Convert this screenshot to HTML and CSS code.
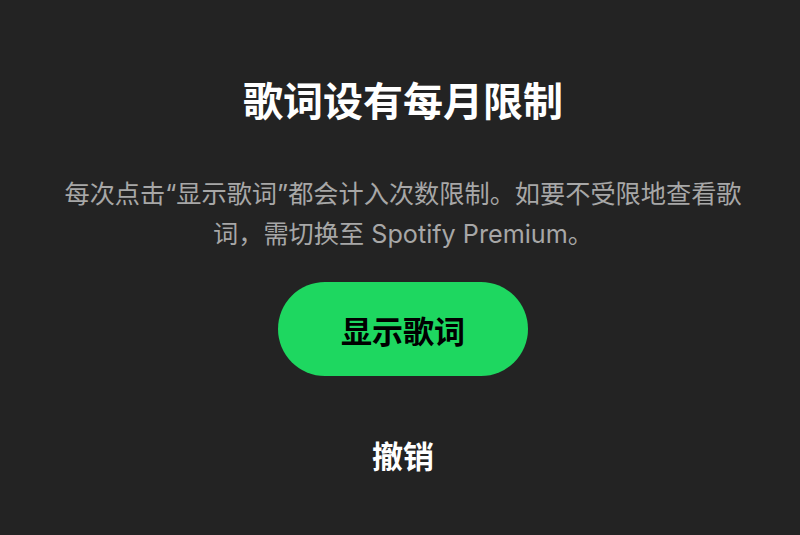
FILE: index.html
```html
<!DOCTYPE html>
<html lang="zh-CN">
<head>
<meta charset="utf-8">
<link rel="stylesheet" href="styles.css">
</head>
<body>
<div class="dialog">
  <h1 class="title">歌词设有每月限制</h1>
  <p class="desc">每次点击“显示歌词”都会计入次数限制。如要不受限地查看歌词，需切换至 Spotify Premium。</p>
  <button class="primary">显示歌词</button>
  <button class="cancel">撤销</button>
</div>
</body>
</html>
```
FILE: styles.css
```css
html, body {
  margin: 0;
  padding: 0;
  background: #232323;
  height: 535px;
  overflow: hidden;
}
.dialog {
  display: flex;
  flex-direction: column;
  align-items: center;
  padding-top: 77px;
  padding-left: 6px;
  font-family: "Inter", "Noto Sans CJK SC", sans-serif;
}
.title {
  margin: 0;
  font-size: 40px;
  line-height: 44px;
  font-weight: 700;
  color: #ffffff;
  font-family: "Noto Sans CJK SC", sans-serif;
}
.desc {
  margin: 53px 0 0;
  width: 700px;
  font-size: 25.2px;
  line-height: 40px;
  color: #a7a7a7;
  text-align: center;
}
.primary {
  margin-top: 28px;
  width: 250px;
  height: 94px;
  border: none;
  border-radius: 47px;
  background: #1ed760;
  color: #000;
  font-family: "Noto Sans CJK SC", sans-serif;
  font-size: 31px;
  font-weight: 700;
  padding: 0;
}
.cancel {
  margin-top: 59px;
  border: none;
  background: none;
  color: #fff;
  font-family: "Noto Sans CJK SC", sans-serif;
  font-size: 31px;
  line-height: 40px;
  font-weight: 700;
  padding: 0;
}
```
